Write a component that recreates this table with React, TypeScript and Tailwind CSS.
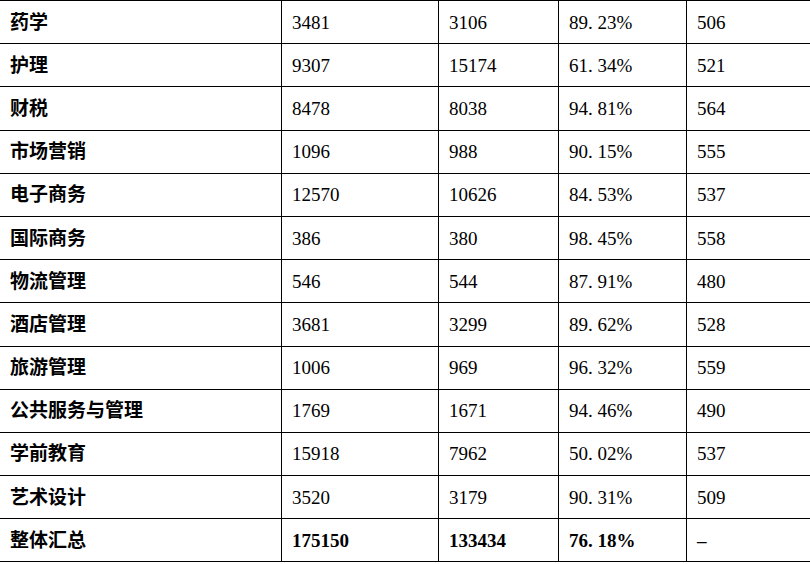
const rows = [
  ['药学', '3481', '3106', '89.23%', '506'],
  ['护理', '9307', '15174', '61.34%', '521'],
  ['财税', '8478', '8038', '94.81%', '564'],
  ['市场营销', '1096', '988', '90.15%', '555'],
  ['电子商务', '12570', '10626', '84.53%', '537'],
  ['国际商务', '386', '380', '98.45%', '558'],
  ['物流管理', '546', '544', '87.91%', '480'],
  ['酒店管理', '3681', '3299', '89.62%', '528'],
  ['旅游管理', '1006', '969', '96.32%', '559'],
  ['公共服务与管理', '1769', '1671', '94.46%', '490'],
  ['学前教育', '15918', '7962', '50.02%', '537'],
  ['艺术设计', '3520', '3179', '90.31%', '509'],
];

const total = ['整体汇总', '175150', '133434', '76.18%', '–'];

// SimSun-style period takes a full half-width cell
function Num({ v }: { v: string }) {
  const i = v.indexOf('.');
  if (i < 0) return <>{v}</>;
  return (
    <>
      {v.slice(0, i)}
      <span className="inline-block w-[0.5em]">.</span>
      {v.slice(i + 1)}
    </>
  );
}

function Row({ cells, bold }: { cells: string[]; bold?: boolean }) {
  return (
    <tr className="h-[43.2px]">
      {cells.map((c, i) => (
        <td
          key={i}
          className={`border border-black px-[10px] py-0 align-middle whitespace-nowrap ${
            i === 0 || bold ? 'font-bold' : 'font-normal'
          }`}
        >
          {i === 0 ? c : <Num v={c} />}
        </td>
      ))}
    </tr>
  );
}

export default function App() {
  return (
    <div className="w-[810px] h-[564px] overflow-hidden bg-white">
      <table
        className="ml-[-1px] table-fixed border-collapse text-[19px] leading-none text-black"
        style={{ fontFamily: '"Liberation Serif", "Noto Sans CJK SC", serif', width: 813 }}
      >
        <colgroup>
          <col className="w-[282px]" />
          <col className="w-[157px]" />
          <col className="w-[120px]" />
          <col className="w-[128px]" />
          <col className="w-[126px]" />
        </colgroup>
        <tbody>
          {rows.map((r) => (
            <Row key={r[0]} cells={r} />
          ))}
          <Row cells={total} bold />
        </tbody>
      </table>
    </div>
  );
}
